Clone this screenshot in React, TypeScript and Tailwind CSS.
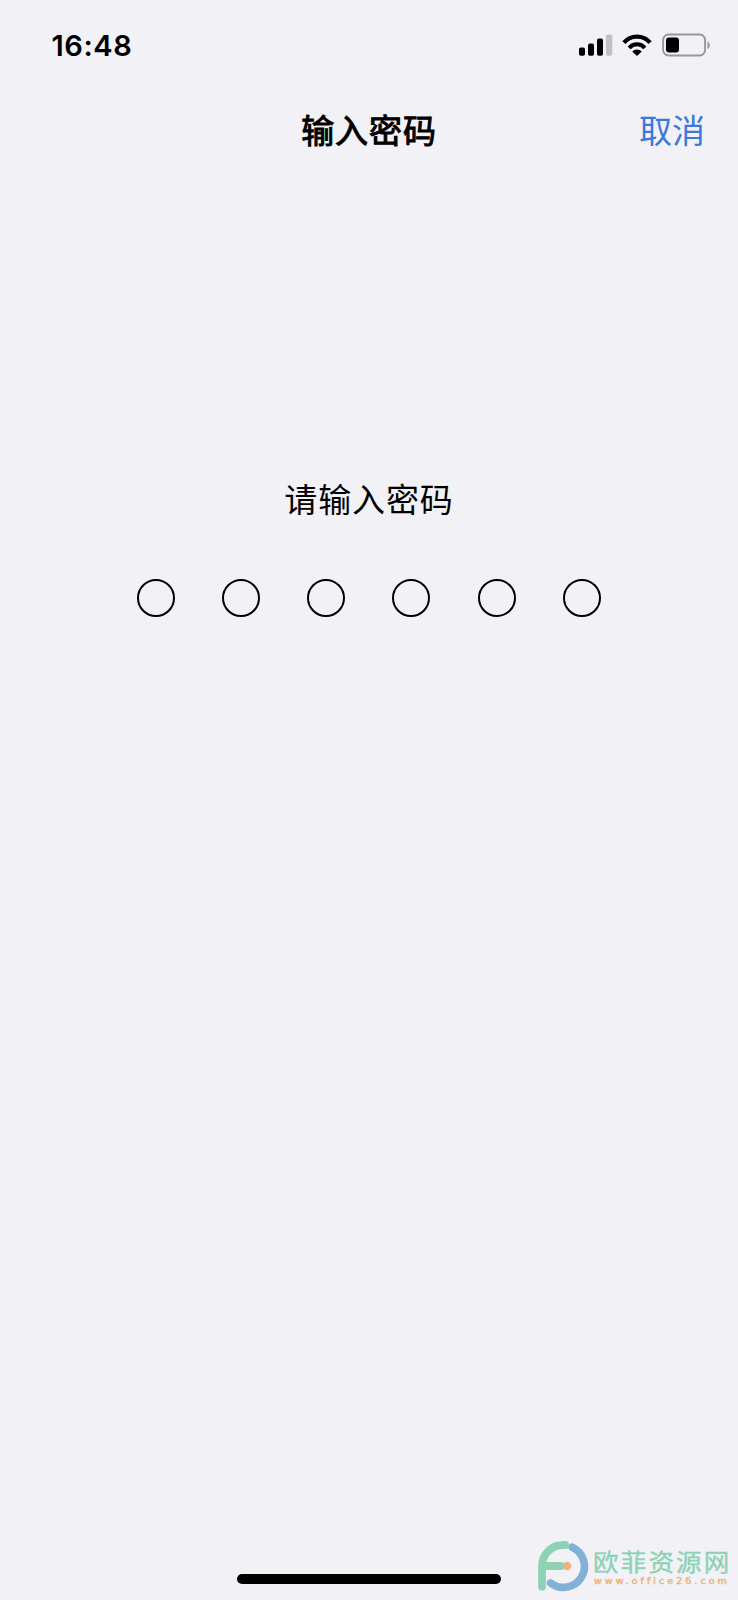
import { useState } from "react"

const PASSCODE_LENGTH = 6

// --- ICONS ---

const SignalIcon = () => (
  <svg width="34" height="22" viewBox="0 0 34 22" aria-hidden="true">
    <rect x="0" y="13.4" width="6" height="8.3" rx="1.8" fill="#000" />
    <rect x="9" y="9.4" width="6" height="12.3" rx="1.8" fill="#000" />
    <rect x="18" y="4.6" width="6" height="17.1" rx="1.8" fill="#000" />
    <rect x="27" y="0.4" width="6.3" height="21.3" rx="1.8" fill="#c1c0c5" />
  </svg>
)

const WifiIcon = () => (
  <svg width="30" height="22" viewBox="0 0 30 22" fill="none" aria-hidden="true">
    <path d="M1.9 8.7a17.2 17.2 0 0 1 26.2 0" stroke="#000" strokeWidth="4.2" />
    <path d="M7.2 13.9a10 10 0 0 1 15.6 0" stroke="#000" strokeWidth="4" />
    <path d="M10.2 17.5a6.8 6.8 0 0 1 9.6 0L15 22z" fill="#000" />
  </svg>
)

const BatteryIcon = () => (
  <svg width="49" height="24" viewBox="0 0 49 24" fill="none" aria-hidden="true">
    <rect x="1.1" y="1.5" width="42" height="21" rx="5.5" stroke="#97979b" strokeWidth="1.9" />
    <rect x="4" y="4.6" width="13" height="14.8" rx="3" fill="#000" />
    <path d="M45.5 8.4c3 1.2 3 6.3 0 7.5z" fill="#97979b" />
  </svg>
)

const LogoIcon = () => (
  <svg className="shrink-0" width="52" height="52" viewBox="0 0 52 52" fill="none" strokeLinecap="round" aria-hidden="true">
    <path d="M35.2 7.2A21 21 0 1 1 13.6 42.9" stroke="#82b1d7" strokeWidth="7.6" />
    <path d="M28.2 5H26A21 21 0 0 0 5 26v20.7M5 26h18.6" stroke="#8ed2b6" strokeWidth="7.8" />
    <circle cx="30" cy="26" r="4.3" fill="#efb47b" />
  </svg>
)

// --- COMPONENTS ---

const StatusBar = () => (
  <header className="flex h-[90px] items-center justify-between pl-[51.5px] pr-[27px]">
    <span className="font-[Inter] text-[29px] font-semibold leading-none tracking-[0.6px]">16:48</span>
    <div className="flex items-center">
      <SignalIcon />
      <span className="ml-[9px] flex"><WifiIcon /></span>
      <span className="ml-[10px] flex"><BatteryIcon /></span>
    </div>
  </header>
)

const PasscodeDots = ({ filled }: { filled: number }) => (
  <div className="mt-[52px] flex justify-center gap-[47px]">
    {Array.from({ length: PASSCODE_LENGTH }, (_, i) => (
      <span
        key={i}
        className={`h-[38px] w-[38px] rounded-full border-2 border-black ${i === 4 ? "ml-px" : ""} ${i < filled ? "bg-black" : ""}`}
      />
    ))}
  </div>
)

const Brand = () => (
  <div className="absolute bottom-[8px] right-0 flex w-[201px] items-start">
    <LogoIcon />
    <div className="ml-[4px] pt-[7px]">
      <div className="origin-center scale-y-[0.92] whitespace-nowrap text-[25.5px] leading-[28px] tracking-[2.2px] text-[#8ed2b6] [-webkit-text-stroke:0.4px_#8ed2b6]">
        欧菲资源网
      </div>
      <div className="whitespace-nowrap pl-px font-['DejaVu_Sans'] text-[9.5px] leading-[11px] tracking-[3.05px] text-[#efb47b] [-webkit-text-stroke:0.5px_#efb47b]">
        www.office26.com
      </div>
    </div>
  </div>
)

// --- MAIN PAGE ---

export default function App() {
  const [digits, setDigits] = useState("")

  return (
    <div className="relative flex h-[1600px] w-[738px] flex-col overflow-hidden bg-[#f1f1f6] font-['Noto_Sans_CJK_SC',sans-serif] text-black">
      <StatusBar />

      <nav className="grid h-[78px] grid-cols-3 items-center">
        <h1 className="col-start-2 text-center text-[33px] font-normal leading-none tracking-[0.9px] [-webkit-text-stroke:1px_#000]">输入密码</h1>
        <button
          onClick={() => setDigits("")}
          className="justify-self-end pr-[33px] text-[33px] leading-none text-[#3b7ad9]"
        >
          取消
        </button>
      </nav>

      <main className="flex flex-col pt-[301px]">
        <p className="text-center text-[33px] leading-[58px] tracking-[0.9px]">请输入密码</p>
        <PasscodeDots filled={digits.length} />
      </main>

      <div className="mb-[16px] mt-auto h-[10px] w-[264px] self-center rounded-full bg-black" />
      <Brand />
    </div>
  )
}
